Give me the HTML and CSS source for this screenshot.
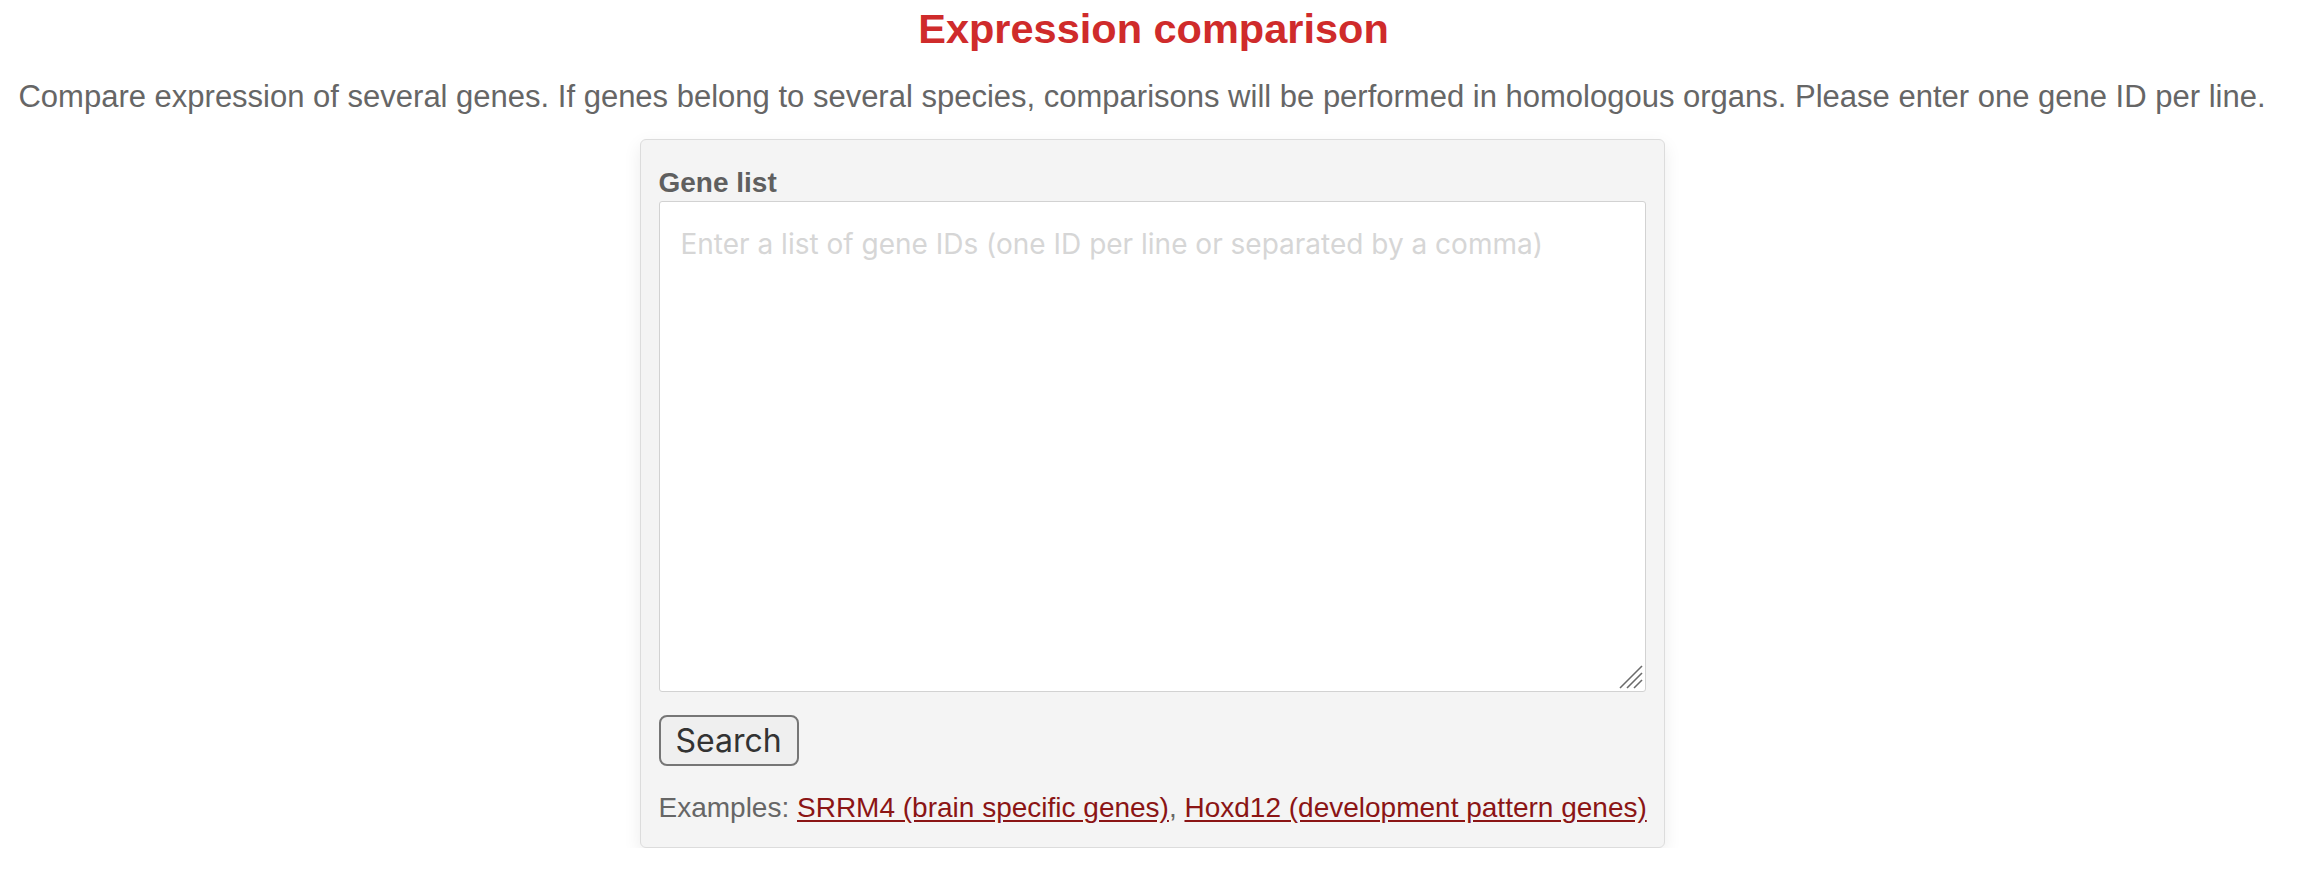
FILE: index.html
```html
<!DOCTYPE html>
<html lang="en">
<head>
<meta charset="utf-8">
<title>Expression comparison</title>
<link rel="stylesheet" href="styles.css">
</head>
<body>
<main class="page">
  <h1 class="title">Expression comparison</h1>
  <p class="intro">Compare expression of several genes. If genes belong to several species, comparisons will be performed in homologous organs. Please enter one gene ID per line.</p>
  <form class="card">
    <label class="label" for="genes">Gene list</label>
    <div class="field">
      <textarea id="genes" class="genes" placeholder="Enter a list of gene IDs (one ID per line or separated by a comma)"></textarea>
      <svg class="grip" width="26" height="26" viewBox="0 0 26 26" aria-hidden="true">
        <line x1="3" y1="25" x2="25" y2="3" stroke="#6b6b6b" stroke-width="1.6"/>
        <line x1="10" y1="25" x2="25" y2="10" stroke="#6b6b6b" stroke-width="1.6"/>
        <line x1="17" y1="25" x2="25" y2="17" stroke="#6b6b6b" stroke-width="1.6"/>
      </svg>
    </div>
    <div class="actions">
      <button type="button" class="search">Search</button>
    </div>
    <p class="examples">Examples: <a href="#">SRRM4 (brain specific genes)</a>, <a href="#">Hoxd12 (development pattern genes)</a></p>
  </form>
</main>
</body>
</html>
```

FILE: styles.css
```css
html, body {
  margin: 0;
  padding: 0;
  background: #ffffff;
}

body {
  font-family: "Liberation Sans", Arial, sans-serif;
  color: #666666;
}

.page {
  display: flex;
  flex-direction: column;
  align-items: center;
}

.title {
  margin: 6px 0 0 9px;
  font-size: 41.5px;
  line-height: 46px;
  font-weight: bold;
  color: #cf2b2b;
  text-align: center;
}

.intro {
  margin: 25px 14px 0 0;
  font-size: 31px;
  line-height: 40px;
  text-align: center;
  color: #666666;
}

.card {
  box-sizing: border-box;
  width: 1025px;
  margin: 22px 0 0 6px;
  padding: 25px 18px 21px 18px;
  background: #f4f4f4;
  border: 1px solid #dcdcdc;
  border-radius: 6px;
  box-shadow: 0 6px 18px rgba(0, 0, 0, 0.08);
  display: flex;
  flex-direction: column;
}

.label {
  font-size: 28px;
  line-height: 36px;
  font-weight: bold;
  color: #5f5f5f;
}

.field {
  position: relative;
  width: 987px;
  height: 491px;
}

.genes {
  box-sizing: border-box;
  display: block;
  width: 100%;
  height: 100%;
  margin: 0;
  padding: 25px 21px;
  border: 1.5px solid #d2d2d2;
  border-radius: 3px;
  background: #ffffff;
  font-family: "Inter", "Liberation Sans", sans-serif;
  font-size: 28px;
  line-height: 34px;
  color: #333333;
  resize: none;
}

.genes::placeholder {
  color: #d6d6d6;
}

.grip {
  position: absolute;
  right: 3px;
  bottom: 3px;
}

.actions {
  display: flex;
  margin-top: 23px;
}

.search {
  box-sizing: border-box;
  height: 51px;
  padding: 0 15px;
  background: #efefef;
  border: 2px solid #767676;
  border-radius: 8px;
  font-family: "Inter", "Liberation Sans", sans-serif;
  font-size: 32px;
  color: #333333;
}

.examples {
  margin: 24px 0 0;
  font-size: 28px;
  line-height: 36px;
  white-space: nowrap;
  color: #666666;
}

.examples a {
  color: #8b1515;
  text-decoration: underline;
  text-underline-offset: 3px;
}
```
